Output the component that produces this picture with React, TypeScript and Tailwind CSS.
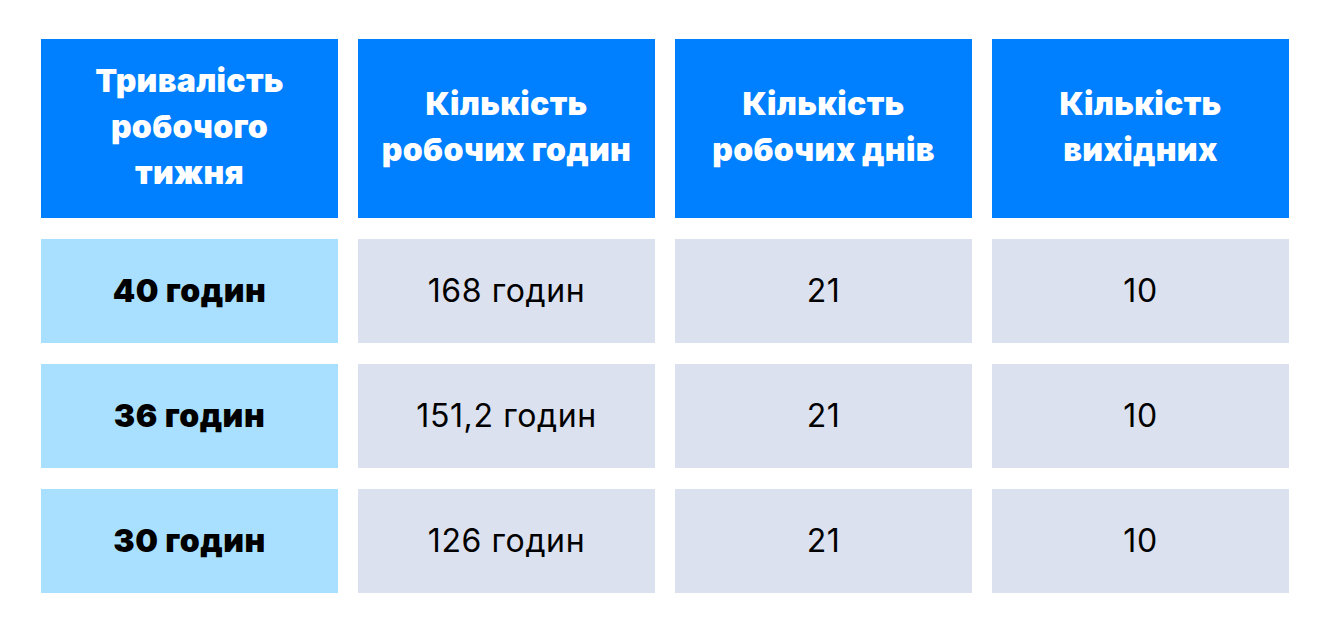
const headers = [
  ['Тривалість', 'робочого', 'тижня'],
  ['Кількість', 'робочих годин'],
  ['Кількість', 'робочих днів'],
  ['Кількість', 'вихідних'],
]

const rows = [
  ['40 годин', '168 годин', '21', '10'],
  ['36 годин', '151,2 годин', '21', '10'],
  ['30 годин', '126 годин', '21', '10'],
]

export default function App() {
  return (
    <div className="min-h-screen bg-white pl-[41px] pt-[39px] font-['Inter','Noto_Sans',sans-serif]">
      <div className="grid grid-cols-[repeat(4,297px)] gap-x-[20px] gap-y-[21px]">
        {headers.map((lines, i) => (
          <div
            key={i}
            className="flex h-[179px] flex-col items-center justify-center bg-[#0080ff] pb-[4px] text-center text-[32px] font-black leading-[46px] tracking-[0.3px] text-white"
          >
            {lines.map((l) => (
              <span key={l}>{l}</span>
            ))}
          </div>
        ))}
        {rows.map((row, r) =>
          row.map((cell, c) => (
            <div
              key={`${r}-${c}`}
              className={
                c === 0
                  ? 'flex h-[104px] items-center justify-center bg-[#a9e0ff] text-[32px] font-black tracking-[0.5px] text-black'
                  : 'flex h-[104px] items-center justify-center bg-[#dce1ef] text-[32px] tracking-[0.6px] text-black'
              }
            >
              {cell}
            </div>
          ))
        )}
      </div>
    </div>
  )
}
